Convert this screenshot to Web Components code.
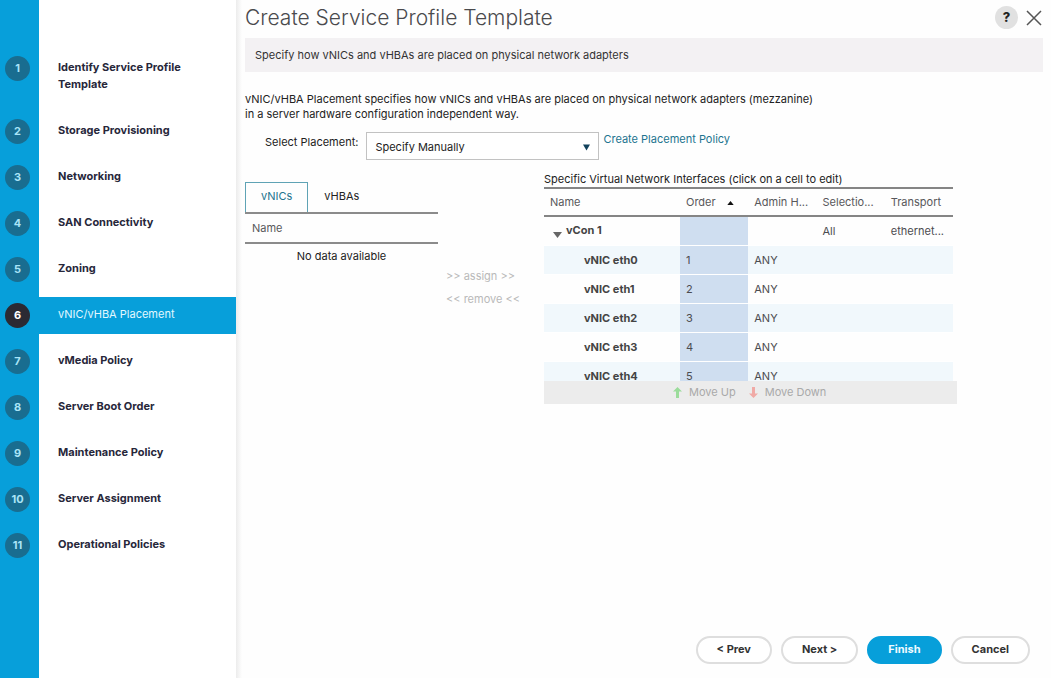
<!DOCTYPE html>
<html lang="en">
<head>
<meta charset="utf-8">
<meta name="viewport" content="width=device-width, initial-scale=1">
<title>Create Service Profile Template</title>
<style>
  html, body { margin: 0; min-height: 100%; background: #fefefe; }
  body {
    font: 11px/15px Inter, "Open Sans", sans-serif;
    color: #222;
    --blue: #079fda;
    --link: #22748f;
    --grey: #58585b;
  }
</style>
</head>
<body>
<service-wizard>
  <wizard-step slot="steps" number="1">Identify Service Profile Template</wizard-step>
  <wizard-step slot="steps" number="2">Storage Provisioning</wizard-step>
  <wizard-step slot="steps" number="3">Networking</wizard-step>
  <wizard-step slot="steps" number="4">SAN Connectivity</wizard-step>
  <wizard-step slot="steps" number="5">Zoning</wizard-step>
  <wizard-step slot="steps" number="6" current>vNIC/vHBA Placement</wizard-step>
  <wizard-step slot="steps" number="7">vMedia Policy</wizard-step>
  <wizard-step slot="steps" number="8">Server Boot Order</wizard-step>
  <wizard-step slot="steps" number="9">Maintenance Policy</wizard-step>
  <wizard-step slot="steps" number="10">Server Assignment</wizard-step>
  <wizard-step slot="steps" number="11">Operational Policies</wizard-step>

  <wizard-header slot="header">
    Create Service Profile Template
    <span slot="summary">Specify how vNICs and vHBAs are placed on physical network adapters</span>
  </wizard-header>

  <placement-form></placement-form>
  <placement-board></placement-board>

  <pill-button slot="actions">&lt; Prev</pill-button>
  <pill-button slot="actions">Next &gt;</pill-button>
  <pill-button slot="actions" primary>Finish</pill-button>
  <pill-button slot="actions">Cancel</pill-button>
</service-wizard>

<script>
const define = (name, html, setup) => {
  const template = document.createElement('template');
  template.innerHTML = html;
  customElements.define(name, class extends HTMLElement {
    connectedCallback() {
      if (this.shadowRoot) return;
      this.attachShadow({ mode: 'open' }).append(template.content.cloneNode(true));
      if (setup) setup(this, this.shadowRoot);
    }
  });
};

/* Page frame: step rail on the left, content and actions on the right */
define('service-wizard', `
  <style>
    :host { display: flex; min-height: 100vh; }
    nav {
      flex: 0 0 236px; box-sizing: border-box; padding-top: 50px;
      display: flex; flex-direction: column; gap: 9px;
      background: linear-gradient(to right, var(--blue) 39px, #fff 39px);
    }
    main {
      flex: 1; min-width: 0; box-sizing: border-box; padding: 5px 8px 14px 9px;
      display: flex; flex-direction: column;
      background: linear-gradient(to right, #ececec, #fefefe 6px);
    }
    footer { margin-top: auto; padding-right: 13px; display: flex; justify-content: flex-end; gap: 9px; }
  </style>
  <nav aria-label="Wizard steps"><slot name="steps"></slot></nav>
  <main>
    <slot name="header"></slot>
    <slot></slot>
    <footer><slot name="actions"></slot></footer>
  </main>`);

define('wizard-step', `
  <style>
    :host { display: block; }
    a {
      display: grid; grid-template-columns: 39px 1fr; min-height: 37px;
      color: #27273a; text-decoration: none; font-weight: 700;
    }
    .num {
      width: 25px; height: 25px; margin: 6px 0 0 5px; border-radius: 50%;
      background: #196d90; color: #a9e4f7; text-align: center; line-height: 25px;
    }
    .label { padding: 9px 44px 11px 19px; line-height: 17px; }
    :host([current]) .num { background: #2b2a33; color: #fff; }
    :host([current]) .label { background: var(--blue); color: #e2f8ff; font-weight: 400; }
  </style>
  <a href="#"><span class="num"></span><span class="label"><slot></slot></span></a>`,
  (host, root) => {
    root.querySelector('.num').textContent = host.getAttribute('number');
    if (host.hasAttribute('current')) root.querySelector('a').setAttribute('aria-current', 'step');
  });

define('wizard-header', `
  <style>
    :host { display: block; }
    .top { display: flex; align-items: center; height: 25px; }
    h1 { margin: 0; flex: 1; font-size: 21px; line-height: 25px; font-weight: 300; color: #4a4a4d; }
    button { padding: 0; border: 0; background: none; font: inherit; display: grid; place-items: center; }
    .help { width: 23px; height: 23px; border-radius: 50%; background: #e1e1e1; font-size: 13px; font-weight: 800; color: #222; }
    .close { width: 16px; height: 16px; margin: 0 1px 0 8px; }
    p { margin: 8px 0 0; padding: 10px 10px 9px; background: #f3f1f3; color: #333; }
  </style>
  <div class="top">
    <h1><slot></slot></h1>
    <button class="help" aria-label="Help">?</button>
    <button class="close" aria-label="Close">
      <svg width="16" height="16" viewBox="0 0 16 16" fill="none" stroke="#555" stroke-width="1.5"><path d="M1 1l14 14M15 1L1 15"/></svg>
    </button>
  </div>
  <p><slot name="summary"></slot></p>`);

define('placement-form', `
  <style>
    :host { display: block; margin-top: 20px; }
    p { margin: 0 0 10px; max-width: 600px; }
    .row { display: flex; align-items: flex-start; }
    label { padding: 3px 8px 0 20px; }
    .pick { position: relative; flex: 0 1 233px; }
    select {
      display: block; width: 100%; height: 28px; padding: 3px 24px 0 8px; box-sizing: border-box;
      appearance: none; border: 1px solid #c2c2c2; border-radius: 0; background: #fff;
      font: inherit; color: #222;
    }
    svg { position: absolute; right: 9px; top: 12px; pointer-events: none; }
    a { margin-left: 4px; color: var(--link); text-decoration: none; }
  </style>
  <p>vNIC/vHBA Placement specifies how vNICs and vHBAs are placed on physical network adapters (mezzanine)<br>in a server hardware configuration independent way.</p>
  <div class="row">
    <label for="placement">Select Placement:</label>
    <div class="pick">
      <select id="placement"><option>Specify Manually</option></select>
      <svg width="7" height="7" viewBox="0 0 7 7"><path d="M0 .5h7L3.500 6.500z" fill="#12425c"/></svg>
    </div>
    <a href="#">Create Placement Policy</a>
  </div>`);

define('placement-board', `
  <style>
    :host {
      display: grid; grid-template-columns: 193fr 106fr 413fr 86fr; align-items: start; margin: 12px 0 20px;
    }
    adapter-list { margin-top: 10px; }
    .move { display: flex; flex-direction: column; align-items: flex-start; gap: 8px; padding: 97px 0 0 8px; }
    button { padding: 0; border: 0; background: none; font: inherit; white-space: nowrap; color: #b9b9b9; }
  </style>
  <adapter-list></adapter-list>
  <div class="move">
    <button disabled>&gt;&gt; assign &gt;&gt;</button>
    <button disabled>&lt;&lt; remove &lt;&lt;</button>
  </div>
  <interface-table></interface-table>`);

define('adapter-list', `
  <style>
    :host { display: block; }
    .tabs { display: flex; }
    .tabs button {
      height: 30px; padding: 0 15px 2px; border: 1px solid transparent; border-bottom: 0;
      background: none; font: inherit; color: #222;
    }
    .tabs [aria-selected=true] { border-color: #5fa3b5; color: var(--link); }
    table { width: 100%; border-collapse: collapse; }
    th {
      height: 28px; padding: 0 7px; text-align: left; font-weight: 400; color: var(--grey);
      border-top: 2px solid #8b8b8b; border-bottom: 2px solid #8b8b8b;
    }
    td { padding: 5px 0; text-align: center; }
  </style>
  <div class="tabs" role="tablist">
    <button role="tab" aria-selected="true">vNICs</button>
    <button role="tab" aria-selected="false">vHBAs</button>
  </div>
  <table>
    <thead><tr><th>Name</th></tr></thead>
    <tbody><tr><td>No data available</td></tr></tbody>
  </table>`);

define('interface-table', `
  <style>
    :host { display: block; }
    .scroll { max-height: 194px; overflow: auto; scrollbar-width: none; padding-right: 4px; }
    table { width: 100%; table-layout: fixed; border-spacing: 0; color: #4c4c50; }
    col:first-child { width: 136px; }
    th, td { box-sizing: border-box; text-align: left; padding: 0 6px; font-weight: 400; white-space: nowrap; overflow: hidden; }
    thead th {
      height: 30px; color: var(--grey);
      border-top: 2px solid #858585; border-bottom: 2px solid #858585;
    }
    tbody th, tbody td { height: 29px; border-bottom: 1px solid #fff; padding-right: 2px; line-height: 11px; }
    tbody th { font-weight: 700; color: #444; padding-left: 40px; }
    tbody tr:nth-child(even) { background: #f1f8fc; }
    tbody td:nth-child(2) { background: #cfdef0; }
    tbody .group { padding-left: 9px; }
    .group svg { vertical-align: -4px; margin-right: 4px; }
    .sort { margin-left: 8px; vertical-align: 1px; }
    .bar { display: flex; align-items: center; height: 23px; padding-left: 129px; gap: 13px; background: #ececec; }
    .bar button { display: flex; align-items: center; gap: 7px; padding: 0; border: 0; background: none; font: inherit; color: #a9a9a9; }
  </style>
  <div id="title">Specific Virtual Network Interfaces (click on a cell to edit)</div>
  <div class="scroll">
    <table aria-labelledby="title">
      <colgroup><col><col><col><col><col></colgroup>
      <thead><tr>
        <th>Name</th>
        <th aria-sort="ascending">Order <svg class="sort" width="7" height="4" viewBox="0 0 8 5"><path d="M0 5L4 0l4 5z" fill="#111"/></svg></th>
        <th>Admin H...</th><th>Selectio...</th><th>Transport</th>
      </tr></thead>
      <tbody>
        <tr><th class="group"><svg width="9" height="6" viewBox="0 0 9 6"><path d="M0 0h9L4.500 6z" fill="#666"/></svg>vCon 1</th><td></td><td></td><td>All</td><td>ethernet...</td></tr>
        <tr><th>vNIC eth0</th><td>1</td><td>ANY</td><td></td><td></td></tr>
        <tr><th>vNIC eth1</th><td>2</td><td>ANY</td><td></td><td></td></tr>
        <tr><th>vNIC eth2</th><td>3</td><td>ANY</td><td></td><td></td></tr>
        <tr><th>vNIC eth3</th><td>4</td><td>ANY</td><td></td><td></td></tr>
        <tr><th>vNIC eth4</th><td>5</td><td>ANY</td><td></td><td></td></tr>
      </tbody>
    </table>
  </div>
  <div class="bar">
    <button disabled><svg width="9" height="11" viewBox="0 0 9 11"><path d="M4.500 0L9 4.500H6V11H3V4.500H0z" fill="#9bdc9b"/></svg>Move Up</button>
    <button disabled><svg width="9" height="11" viewBox="0 0 9 11"><path d="M4.500 11L0 6.500h3V0h3v6.500h3z" fill="#f0aaa6"/></svg>Move Down</button>
  </div>`);

define('pill-button', `
  <style>
    :host { display: block; }
    button {
      height: 28px; padding: 0 19px 1px; border: 2px solid #dedede; border-radius: 14px;
      background: #fff; font: inherit; font-weight: 700; color: #333;
    }
    :host([primary]) button { background: var(--blue); border-color: var(--blue); color: #f0fbff; }
  </style>
  <button><slot></slot></button>`);
</script>
</body>
</html>
